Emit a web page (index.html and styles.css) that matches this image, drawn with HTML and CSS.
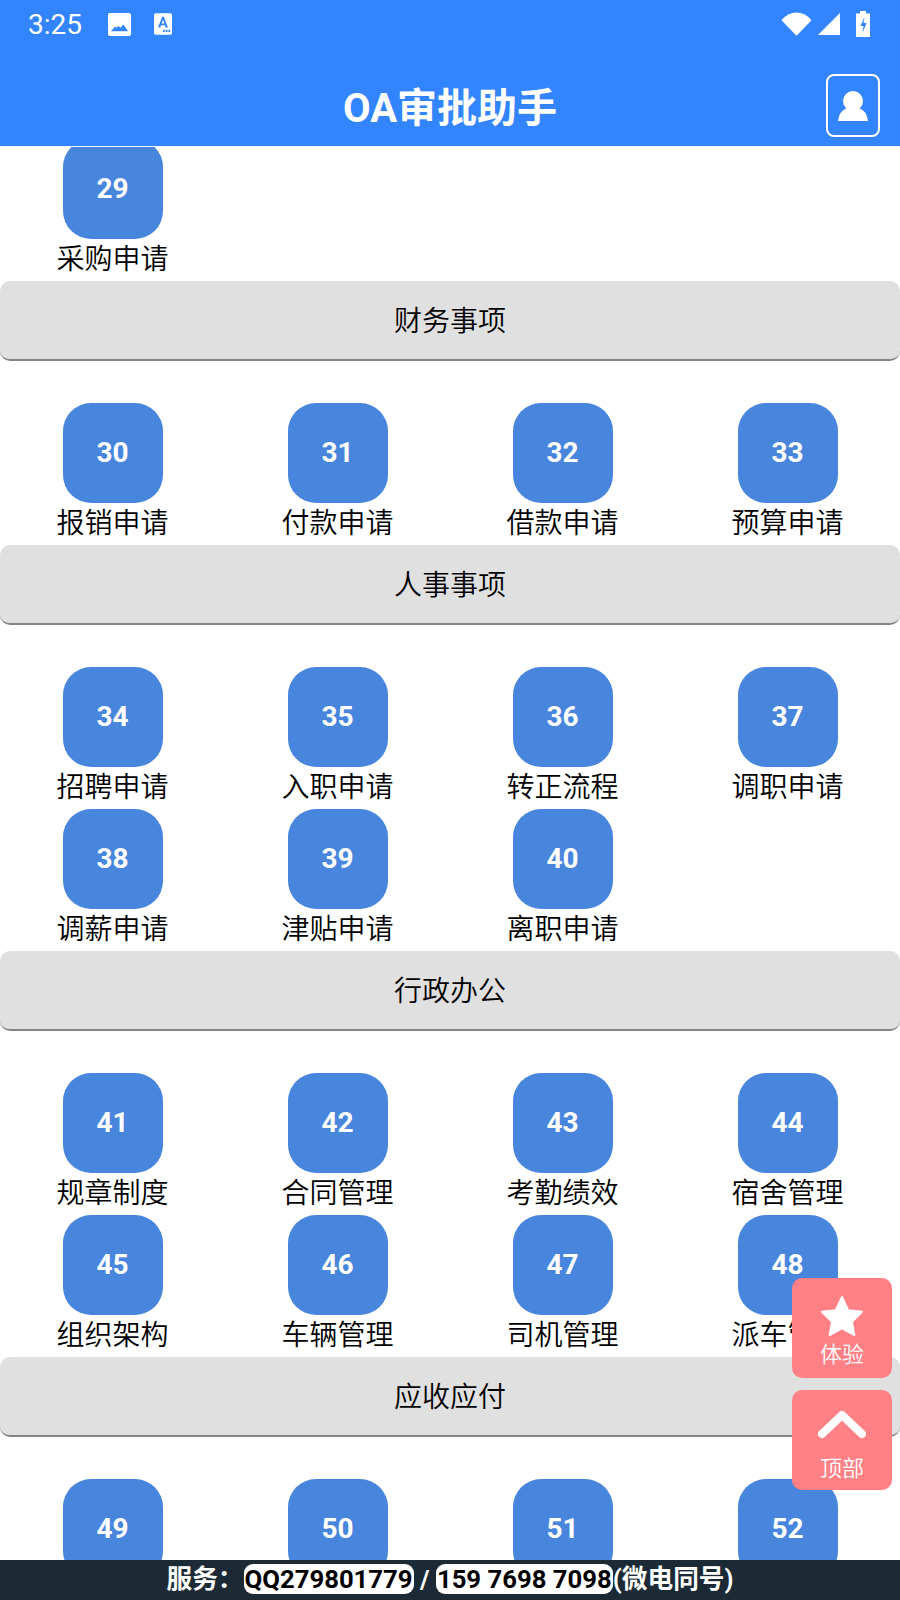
FILE: index.html
```html
<!DOCTYPE html>
<html lang="zh-CN">
<head>
    <meta charset="UTF-8">
    <meta name="viewport" content="width=device-width, initial-scale=1.0">
    <title>OA审批助手</title>
    <link rel="stylesheet" href="styles.css">
</head>
<body>
    <div class="app">
        <header class="topbar">
            <div class="status">
                <span class="time">3:25</span>
                <svg class="st-img" viewBox="0 0 24 24"><path fill="#fff" fill-rule="evenodd" d="M2 0h20a2 2 0 0 1 2 2v20a2 2 0 0 1-2 2H2a2 2 0 0 1-2-2V2a2 2 0 0 1 2-2zM3 19h18l-5-7-3 3.500-2-2-2 2-1.500-1.500z"/></svg>
                <svg class="st-a" viewBox="0 0 20 24"><path fill="#fff" fill-rule="evenodd" d="M2 0h16a2 2 0 0 1 2 2v20a2 2 0 0 1-2 2H2a2 2 0 0 1-2-2V2a2 2 0 0 1 2-2zM9 4l-4.500 12h2.500l.8-2.500h4.400l.8 2.500h2.500L11 4zM8.500 11.500L10 7l1.500 4.500zM10 18.500v2.500h2v-2.500zM13 18.500v2.500h2v-2.500zM16 18.500v2.500h2v-2.500z"/></svg>
                <span class="spacer"></span>
                <svg class="st-wifi" viewBox="0 0 32 24"><path fill="#fff" d="M16 24L.5 8Q7 0 16 0t15.500 8z"/></svg>
                <svg class="st-signal" viewBox="0 0 22 22"><path fill="#fff" d="M22 0v22H0z"/></svg>
                <svg class="st-batt" viewBox="0 0 14 26"><path fill="#fff" fill-rule="evenodd" d="M4 0h6v2.500h4V26H0V2.500h4zM8.500 6L4.500 15h3l-1 7 4-10H7.500z"/></svg>
            </div>
            <div class="titlebar">
                <h1>OA审批助手</h1>
                <button class="user-btn">
                    <svg viewBox="0 0 30 30"><circle cx="15" cy="10" r="10" fill="#fff"/><path fill="#fff" d="M0 30q1-10 9-13h12q8 3 9 13z"/></svg>
                </button>
            </div>
        </header>

        <main class="content">
            <div class="grid first">
                <div class="cell"><div class="badge">29</div><div class="label">采购申请</div></div>
            </div>

            <div class="section">财务事项</div>
            <div class="grid">
                <div class="cell"><div class="badge">30</div><div class="label">报销申请</div></div>
                <div class="cell"><div class="badge">31</div><div class="label">付款申请</div></div>
                <div class="cell"><div class="badge">32</div><div class="label">借款申请</div></div>
                <div class="cell"><div class="badge">33</div><div class="label">预算申请</div></div>
            </div>

            <div class="section">人事事项</div>
            <div class="grid">
                <div class="cell"><div class="badge">34</div><div class="label">招聘申请</div></div>
                <div class="cell"><div class="badge">35</div><div class="label">入职申请</div></div>
                <div class="cell"><div class="badge">36</div><div class="label">转正流程</div></div>
                <div class="cell"><div class="badge">37</div><div class="label">调职申请</div></div>
                <div class="cell"><div class="badge">38</div><div class="label">调薪申请</div></div>
                <div class="cell"><div class="badge">39</div><div class="label">津贴申请</div></div>
                <div class="cell"><div class="badge">40</div><div class="label">离职申请</div></div>
            </div>

            <div class="section">行政办公</div>
            <div class="grid">
                <div class="cell"><div class="badge">41</div><div class="label">规章制度</div></div>
                <div class="cell"><div class="badge">42</div><div class="label">合同管理</div></div>
                <div class="cell"><div class="badge">43</div><div class="label">考勤绩效</div></div>
                <div class="cell"><div class="badge">44</div><div class="label">宿舍管理</div></div>
                <div class="cell"><div class="badge">45</div><div class="label">组织架构</div></div>
                <div class="cell"><div class="badge">46</div><div class="label">车辆管理</div></div>
                <div class="cell"><div class="badge">47</div><div class="label">司机管理</div></div>
                <div class="cell"><div class="badge">48</div><div class="label">派车管理</div></div>
            </div>

            <div class="section">应收应付</div>
            <div class="grid">
                <div class="cell"><div class="badge">49</div></div>
                <div class="cell"><div class="badge">50</div></div>
                <div class="cell"><div class="badge">51</div></div>
                <div class="cell"><div class="badge">52</div></div>
            </div>
        </main>

        <footer class="service">
            服务：<span class="pill">QQ279801779</span> / <span class="pill">159 7698 7098</span>(微电同号)
        </footer>

        <div class="floats">
            <div class="float-btn">
                <svg class="fl-star" viewBox="0 0 46 44"><path fill="#fff" stroke="#fff" stroke-width="2" stroke-linejoin="round" d="M23 2l6.500 14L44 17.500 33.500 28 36 42 23 35l-13 7 2.500-14L2 17.500 16.500 16z"/></svg>
                <span>体验</span>
            </div>
            <div class="float-btn">
                <svg class="fl-up" viewBox="0 0 48 30"><path fill="none" stroke="#fff" stroke-width="8" stroke-linecap="round" stroke-linejoin="round" d="M4 25L24 6l20 19"/></svg>
                <span>顶部</span>
            </div>
        </div>
    </div>
</body>
</html>
```

FILE: styles.css
```css
* { box-sizing: border-box; }
html, body { margin: 0; padding: 0; height: 100%; }
body { font-family: Roboto, "Noto Sans CJK SC", sans-serif; background-color: #fff; color: #000; overflow: hidden; }

.app { position: relative; display: flex; flex-direction: column; height: 1600px; overflow: hidden; }

/* top bar */
.topbar { flex: none; height: 146px; background-color: #3385ff; color: #fff; }
.status { display: flex; align-items: center; height: 48px; padding: 0 28px; }
.time { font-size: 28px; width: 54px; margin-right: 26px; }
.st-img { width: 23px; height: 23px; margin-right: 23px; }
.st-a { width: 18px; height: 22px; }
.spacer { flex: 1; }
.st-wifi { width: 31px; height: 24px; margin-right: 6px; }
.st-signal { width: 22px; height: 22px; margin-right: 16px; }
.st-batt { width: 14px; height: 26px; margin-right: 2px; }

.titlebar { position: relative; display: flex; align-items: center; justify-content: center; height: 98px; padding-top: 16px; }
.titlebar h1 { margin: 0; font-size: 40px; font-weight: 700; }
.user-btn { position: absolute; right: 20px; top: 26px; display: flex; align-items: center; justify-content: center; width: 54px; height: 63px; padding: 0; background: none; border: 2px solid #fff; border-radius: 8px; }
.user-btn svg { width: 30px; height: 30px; }

/* main list, scrolled a bit so the first row is cut by the header */
.content { flex: 1; min-height: 0; overflow: hidden; border-top: 1px solid #eef4ff; }
.grid { display: grid; grid-template-columns: repeat(4, 225px); grid-auto-rows: 142px; padding-top: 42px; }
.grid.first { padding-top: 0; margin-top: -8px; }
.cell { display: flex; flex-direction: column; align-items: center; }
.badge { display: flex; align-items: center; justify-content: center; width: 100px; height: 100px; padding-bottom: 2px; background-color: #4885dd; border-radius: 28px; color: #fff; font-size: 28px; font-weight: 700; }
.label { margin-top: 2px; font-size: 28px; font-weight: 350; line-height: 38px; white-space: nowrap; }
.section { height: 80px; line-height: 81px; background-color: #e0e0e0; border-bottom: 2px solid #848484; border-radius: 10px; font-size: 28px; font-weight: 350; text-align: center; }

/* bottom service strip */
.service { flex: none; height: 40px; background-color: #1c2a35; color: #fff; font-size: 25.700px; font-weight: 700; line-height: 38px; text-align: center; white-space: nowrap; }
.pill { padding: 0 1px; background-color: #fff; color: #000; border-radius: 9px; }

/* floating buttons */
.floats { position: absolute; right: 8px; top: 1278px; display: flex; flex-direction: column; gap: 12px; }
.float-btn { display: flex; flex-direction: column; align-items: center; width: 100px; height: 100px; background-color: #ff8085; border-radius: 10px; color: #fff; font-size: 22px; font-weight: 350; }
.float-btn span { line-height: 30px; }
.float-btn svg { display: block; }
.fl-star { width: 44px; height: 42px; margin: 17px 0 3px; }
.fl-up { width: 48px; height: 30px; margin: 19px 0 15px; }
```
